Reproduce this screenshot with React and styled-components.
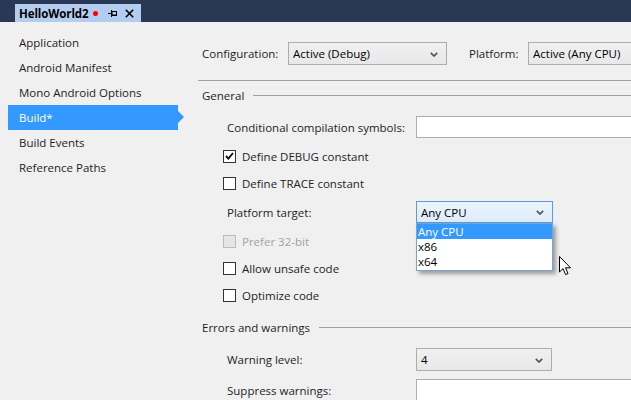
import React from 'react';
import styled, { createGlobalStyle } from 'styled-components';

const Global = createGlobalStyle`
  html, body { margin: 0; padding: 0; background: #f0f0f0; }
  body {
    font-family: "Open Sans", "Segoe UI", "Noto Sans", sans-serif;
    font-size: 11.5px;
    color: #1e1e1e;
  }
  * { box-sizing: border-box; }
`;

const Window = styled.div`
  position: relative;
  width: 631px;
  height: 400px;
  overflow: hidden;
  display: flex;
  flex-direction: column;
  background: #f0f0f0;
`;

const TabStrip = styled.div`
  height: 22px;
  flex-shrink: 0;
  background: #293955;
  display: flex;
  align-items: flex-end;
  padding-left: 15px;
`;

const Tab = styled.div`
  height: 18px;
  width: 126px;
  background: #b3cdf0;
  display: flex;
  align-items: center;
  padding-left: 4px;
`;

const TabTitle = styled.span`
  font-weight: 700;
  font-size: 11.5px;
  color: #000;
  letter-spacing: -0.1px;
`;

const Dot = styled.span`
  width: 5px;
  height: 5px;
  border-radius: 50%;
  background: #f00;
  margin-left: 5px;
`;

const TabIcon = styled.svg`
  display: block;
  margin-left: ${p => p.$ml}px;
`;

const Body = styled.div`
  flex: 1;
  display: flex;
  min-height: 0;
`;

const Nav = styled.div`
  width: 190px;
  flex-shrink: 0;
  padding: 8px 0 0 8px;
  display: flex;
  flex-direction: column;
`;

const NavItem = styled.div`
  position: relative;
  width: 170px;
  height: 25px;
  line-height: 25px;
  padding-left: 11px;
  color: ${p => (p.$active ? '#fff' : '#1e1e1e')};
  background: ${p => (p.$active ? '#3399ff' : 'transparent')};
  &::after {
    content: '';
    display: ${p => (p.$active ? 'block' : 'none')};
    position: absolute;
    left: 100%;
    top: 6px;
    border-left: 6px solid #3399ff;
    border-top: 6px solid transparent;
    border-bottom: 6px solid transparent;
  }
`;

const Content = styled.div`
  flex: 1;
  min-width: 0;
  padding-left: 8px;
  display: flex;
  flex-direction: column;
`;

const ConfigBar = styled.div`
  display: flex;
  align-items: center;
  padding: 20px 0 0 4px;
  height: 43px;
  white-space: nowrap;
`;

const BarLabel = styled.span`
  flex-shrink: 0;
  width: ${p => p.$w}px;
`;

const Divider = styled.div`
  margin-top: 15px;
  height: 1px;
  background: #a0a0a0;
  flex-shrink: 0;
`;

const SectionTitle = styled.div`
  margin-top: ${p => p.$mt}px;
  height: 14px;
  display: flex;
  align-items: center;
  gap: 9px;
  padding-left: 4px;
  white-space: nowrap;
  &::after {
    content: '';
    flex: 1;
    height: 1px;
    background: #a0a0a0;
  }
`;

const FormRow = styled.div`
  margin-top: ${p => p.$mt}px;
  height: ${p => p.$h || 22}px;
  display: flex;
  align-items: center;
  padding-left: ${p => (p.$check ? 25 : 29)}px;
  flex-shrink: 0;
  white-space: nowrap;
`;

const FieldLabel = styled.span`
  width: 189px;
  flex-shrink: 0;
`;

const TextBox = styled.div`
  width: 320px;
  height: 22px;
  flex-shrink: 0;
  background: #fff;
  border: 1px solid #abadb3;
`;

const SelectBox = styled.div`
  position: relative;
  flex-shrink: 0;
  width: ${p => p.$w}px;
  height: ${p => p.$h || 23}px;
  margin-right: ${p => p.$mr || 0}px;
  display: flex;
  align-items: center;
  padding-left: 4px;
  border: 1px solid ${p => (p.$open ? '#569de5' : '#acacac')};
  background: ${p =>
    p.$open
      ? 'linear-gradient(#ecf4fc, #dcecfc)'
      : 'linear-gradient(#f0f0f0, #e8e8e8)'};
  color: #000;
`;

const Chevron = styled.svg`
  position: absolute;
  right: 8px;
  top: 50%;
  margin-top: -2px;
`;

const ListBox = styled.div`
  position: absolute;
  left: -1px;
  top: calc(100% + 1px);
  width: calc(100% + 2px);
  background: #fff;
  border: 1px solid #7da2ce;
  box-shadow: 3px 3px 4px rgba(0, 0, 0, 0.35);
  padding: 0 0 1px;
  z-index: 2;
`;

const ListItem = styled.div`
  height: 15px;
  line-height: 15px;
  padding-left: 1px;
  color: ${p => (p.$selected ? '#fff' : '#000')};
  background: ${p => (p.$selected ? '#3399ff' : 'transparent')};
`;

const CheckBox = styled.span`
  width: 13px;
  height: 13px;
  flex-shrink: 0;
  border: 1px solid ${p => (p.$disabled ? '#bcbcbc' : '#333')};
  background: ${p => (p.$disabled ? '#e6e6e6' : '#fff')};
  display: flex;
  align-items: center;
  justify-content: center;
  margin-right: 6px;
`;

const CheckText = styled.span`
  color: ${p => (p.$disabled ? '#a3a3a3' : '#1e1e1e')};
`;

const Cursor = styled.svg`
  position: absolute;
  left: 559px;
  top: 256px;
  z-index: 5;
`;

const ChevronIcon = () => (
  <Chevron width="8" height="5" viewBox="0 0 8 5">
    <path d="M0.8 0.8 L4 4 L7.2 0.8" fill="none" stroke="#555" strokeWidth="1.7" />
  </Chevron>
);

const Select = ({ value, w, h, mr, open, children }) => (
  <SelectBox $w={w} $h={h} $mr={mr} $open={open}>
    {value}
    <ChevronIcon />
    {children}
  </SelectBox>
);

const Check = ({ checked, disabled, children }) => (
  <>
    <CheckBox $disabled={disabled}>
      {checked && (
        <svg width="9" height="8" viewBox="0 0 9 8">
          <path d="M1 4 L3.4 6.6 L8 1" fill="none" stroke="#111" strokeWidth="1.9" />
        </svg>
      )}
    </CheckBox>
    <CheckText $disabled={disabled}>{children}</CheckText>
  </>
);

const navItems = [
  'Application',
  'Android Manifest',
  'Mono Android Options',
  'Build*',
  'Build Events',
  'Reference Paths',
];

export default function App() {
  return (
    <Window>
      <Global />
      <TabStrip>
        <Tab>
          <TabTitle>HelloWorld2</TabTitle>
          <Dot />
          <TabIcon $ml={10} width="9" height="7" viewBox="0 0 9 7">
            <path d="M0 3.5 H3" stroke="#000" strokeWidth="1" />
            <path d="M3.5 0 V7" stroke="#000" strokeWidth="1" />
            <rect x="4" y="1.5" width="4.5" height="4" fill="none" stroke="#000" strokeWidth="1" />
            <path d="M4 5 H9" stroke="#000" strokeWidth="1" />
          </TabIcon>
          <TabIcon $ml={8} width="9" height="9" viewBox="0 0 9 9">
            <path d="M0.8 0.8 L8.2 8.2 M8.2 0.8 L0.8 8.2" stroke="#000" strokeWidth="1.6" />
          </TabIcon>
        </Tab>
      </TabStrip>
      <Body>
        <Nav>
          {navItems.map(n => (
            <NavItem key={n} $active={n === 'Build*'}>
              {n}
            </NavItem>
          ))}
        </Nav>
        <Content>
          <ConfigBar>
            <BarLabel $w={86}>Configuration:</BarLabel>
            <Select value="Active (Debug)" w={159} mr={22} />
            <BarLabel $w={59}>Platform:</BarLabel>
            <Select value="Active (Any CPU)" w={159} />
          </ConfigBar>
          <Divider />
          <SectionTitle $mt={7}>General</SectionTitle>
          <FormRow $mt={14}>
            <FieldLabel>Conditional compilation symbols:</FieldLabel>
            <TextBox />
          </FormRow>
          <FormRow $mt={7} $check>
            <Check checked>Define DEBUG constant</Check>
          </FormRow>
          <FormRow $mt={5} $check>
            <Check>Define TRACE constant</Check>
          </FormRow>
          <FormRow $mt={7}>
            <FieldLabel>Platform target:</FieldLabel>
            <Select value="Any CPU" w={137} h={22} open>
              <ListBox>
                <ListItem $selected>Any CPU</ListItem>
                <ListItem>x86</ListItem>
                <ListItem>x64</ListItem>
              </ListBox>
            </Select>
          </FormRow>
          <FormRow $mt={7} $check>
            <Check disabled>Prefer 32-bit</Check>
          </FormRow>
          <FormRow $mt={5} $check>
            <Check>Allow unsafe code</Check>
          </FormRow>
          <FormRow $mt={5} $check>
            <Check>Optimize code</Check>
          </FormRow>
          <SectionTitle $mt={14}>Errors and warnings</SectionTitle>
          <FormRow $mt={14} $h={23}>
            <FieldLabel>Warning level:</FieldLabel>
            <Select value="4" w={136} />
          </FormRow>
          <FormRow $mt={8}>
            <FieldLabel>Suppress warnings:</FieldLabel>
            <TextBox />
          </FormRow>
        </Content>
      </Body>
      <Cursor width="13" height="20" viewBox="0 0 13 20">
        <path
          d="M0.5 0.5 L0.5 16 L4 12.6 L6.6 18.6 L9 17.6 L6.5 11.8 L11.5 11.8 Z"
          fill="#fff"
          stroke="#000"
          strokeWidth="1"
          strokeLinejoin="round"
        />
      </Cursor>
    </Window>
  );
}
